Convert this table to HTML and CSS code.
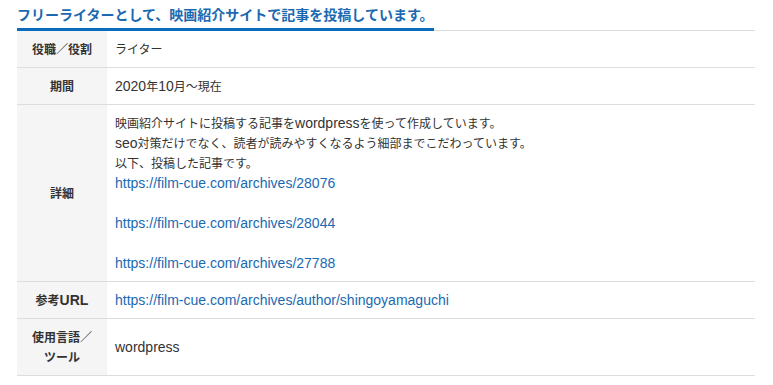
FILE: index.html
```html
<!DOCTYPE html>
<html lang="ja">
<head>
<meta charset="utf-8">
<title>職務経歴</title>
<link rel="stylesheet" href="styles.css">
</head>
<body>

<div class="career">

<h2 class="career-title"><span>フリーライターとして、映画紹介サイトで記事を投稿しています。</span></h2>

<table class="career-table">
<tr>
<th>役職／役割</th>
<td>ライター</td>
</tr>
<tr>
<th>期間</th>
<td><span class="en">2020</span>年<span class="en">10</span>月～現在</td>
</tr>
<tr>
<th>詳細</th>
<td>
映画紹介サイトに投稿する記事を<span class="en">wordpress</span>を使って作成しています。<br>
<span class="en">seo</span>対策だけでなく、読者が読みやすくなるよう細部までこだわっています。<br>
以下、投稿した記事です。<br>
<a href="#">https://film-cue.com/archives/28076</a><br>
<br>
<a href="#">https://film-cue.com/archives/28044</a><br>
<br>
<a href="#">https://film-cue.com/archives/27788</a>
</td>
</tr>
<tr>
<th>参考<span class="en">URL</span></th>
<td><a href="#">https://film-cue.com/archives/author/shingoyamaguchi</a></td>
</tr>
<tr>
<th>使用言語／ツール</th>
<td><span class="en">wordpress</span></td>
</tr>
</table>

</div>

</body>
</html>
```

FILE: styles.css
```css
body {
  margin: 0;
  font-family: "Noto Sans CJK JP", sans-serif;
  font-size: 12px;
  color: #333;
}

/* latin runs sit a little larger than the kana/kanji */
.en,
.career-table a {
  font-family: "Liberation Sans", Arial, sans-serif;
  font-size: 14px;
}

.career {
  padding: 0 18px 0 17px;
}

.career-title {
  margin: 0;
  padding-top: 3px;
  font-size: 14px;
  line-height: 22px;
  color: #1b69b0;
  border-bottom: 1px solid #ddd;
}

.career-title span {
  display: inline-block;
  padding-bottom: 3px;
  border-bottom: 3px solid #0b6cbf;
  margin-bottom: -1px;
}

.career-table {
  width: 100%;
  border-collapse: collapse;
}

.career-table th,
.career-table td {
  border-bottom: 1px solid #ddd;
  padding: 8px 10px;
  line-height: 20px;
  text-align: left;
  vertical-align: middle;
}

.career-table th {
  width: 70px;
  background-color: #f5f5f5;
  text-align: center;
  font-weight: bold;
}

.career-table td {
  padding-left: 8px;
}

.career-table a {
  color: #1b69b0;
  text-decoration: none;
}
```
